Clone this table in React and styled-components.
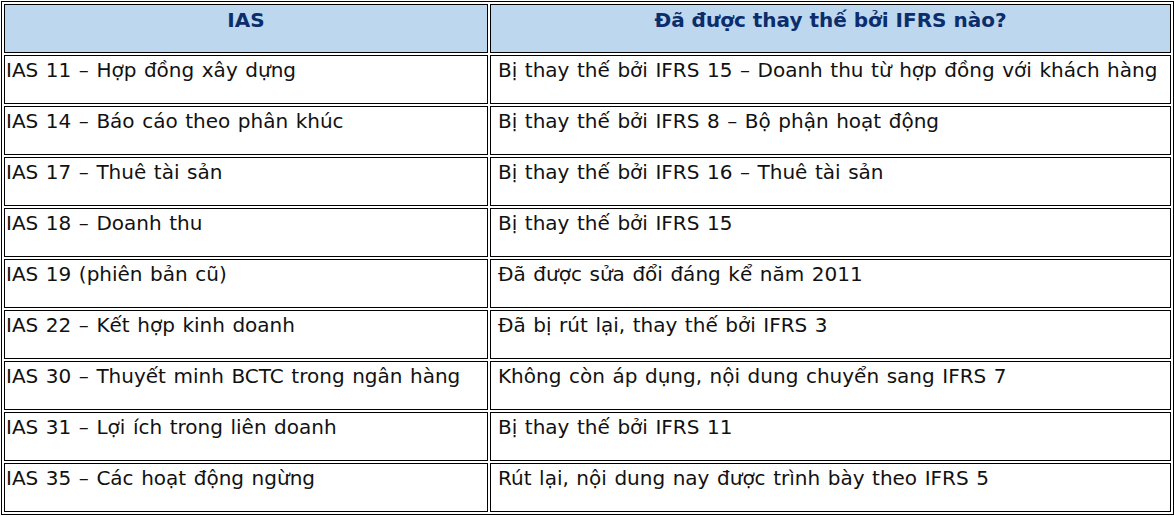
import React from 'react';
import styled, { createGlobalStyle } from 'styled-components';

const GlobalStyle = createGlobalStyle`
  html, body {
    margin: 0;
    padding: 0;
    background: #ffffff;
  }
  body {
    font-family: "DejaVu Sans", Verdana, sans-serif;
  }
`;

const Table = styled.table`
  margin: 1px 0 0 1px;
  width: 1173px;
  border: 1px solid #000;
  border-spacing: 2px;
  table-layout: fixed;
  color: #000;
`;

const HeadCell = styled.th`
  height: 49px;
  box-sizing: border-box;
  padding: 3px 2px 0;
  border: 1px solid #000;
  background: #bdd7ee;
  color: #0c2d6b;
  font-size: 20px;
  font-weight: 700;
  line-height: 1.2;
  text-align: center;
  vertical-align: top;
`;

const Cell = styled.td`
  height: 49px;
  box-sizing: border-box;
  padding: ${({ $wide }) => ($wide ? '2px 4px 0 7px' : '2px 2px 0 1px')};
  border: 1px solid #000;
  font-size: 20px;
  word-spacing: 1.2px;
  line-height: 1.2;
  vertical-align: top;
  white-space: nowrap;
  color: #111;
`;

const rows = [
  ['IAS 11 – Hợp đồng xây dựng', 'Bị thay thế bởi IFRS 15 – Doanh thu từ hợp đồng với khách hàng'],
  ['IAS 14 – Báo cáo theo phân khúc', 'Bị thay thế bởi IFRS 8 – Bộ phận hoạt động'],
  ['IAS 17 – Thuê tài sản', 'Bị thay thế bởi IFRS 16 – Thuê tài sản'],
  ['IAS 18 – Doanh thu', 'Bị thay thế bởi IFRS 15'],
  ['IAS 19 (phiên bản cũ)', 'Đã được sửa đổi đáng kể năm 2011'],
  ['IAS 22 – Kết hợp kinh doanh', 'Đã bị rút lại, thay thế bởi IFRS 3'],
  ['IAS 30 – Thuyết minh BCTC trong ngân hàng', 'Không còn áp dụng, nội dung chuyển sang IFRS 7'],
  ['IAS 31 – Lợi ích trong liên doanh', 'Bị thay thế bởi IFRS 11'],
  ['IAS 35 – Các hoạt động ngừng', 'Rút lại, nội dung nay được trình bày theo IFRS 5'],
];

export default function App() {
  return (
    <>
      <GlobalStyle />
      <Table>
        <colgroup>
          <col style={{ width: 484 }} />
          <col />
        </colgroup>
        <thead>
          <tr>
            <HeadCell>IAS</HeadCell>
            <HeadCell>Đã được thay thế bởi IFRS nào?</HeadCell>
          </tr>
        </thead>
        <tbody>
          {rows.map(([ias, ifrs]) => (
            <tr key={ias}>
              <Cell>{ias}</Cell>
              <Cell $wide>{ifrs}</Cell>
            </tr>
          ))}
        </tbody>
      </Table>
    </>
  );
}
